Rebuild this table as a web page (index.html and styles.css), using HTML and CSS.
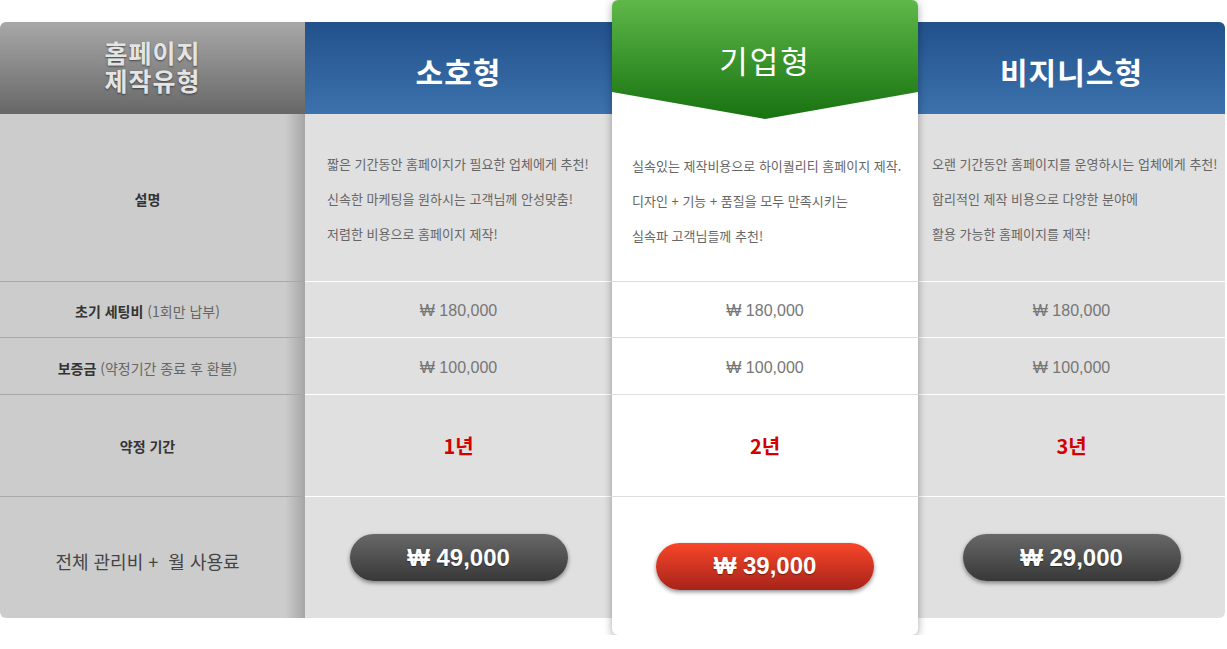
FILE: index.html
```html
<!DOCTYPE html>
<html lang="ko">

<head>
    <meta charset="UTF-8">
    <title>홈페이지 제작유형</title>
    <link rel="stylesheet" href="styles.css">
</head>

<body>
    <div class="pricing">
        <div class="col col-label">
            <div class="head head-label">
                <span>홈페이지</span>
                <span>제작유형</span>
            </div>
            <div class="body">
                <div class="row row-desc"><b>설명</b></div>
                <div class="row row-setup"><span><b>초기 세팅비</b> (1회만 납부)</span></div>
                <div class="row row-deposit"><span><b>보증금</b> (약정기간 종료 후 환불)</span></div>
                <div class="row row-term"><b>약정 기간</b></div>
                <div class="row row-price"><span class="total">전체 관리비 + &nbsp;월 사용료</span></div>
            </div>
        </div>

        <div class="col col-plan">
            <div class="head head-blue">소호형</div>
            <div class="body">
                <div class="row row-desc desc-left">
                    <p>짧은 기간동안 홈페이지가 필요한 업체에게 추천!</p>
                    <p>신속한 마케팅을 원하시는 고객님께 안성맞춤!</p>
                    <p>저렴한 비용으로 홈페이지 제작!</p>
                </div>
                <div class="row row-setup"><span class="won">₩ 180,000</span></div>
                <div class="row row-deposit"><span class="won">₩ 100,000</span></div>
                <div class="row row-term"><span class="term">1년</span></div>
                <div class="row row-price"><span class="btn">₩ 49,000</span></div>
            </div>
        </div>

        <div class="col col-featured">
            <div class="head head-green">기업형</div>
            <div class="body">
                <div class="row row-desc desc-mid">
                    <p>실속있는 제작비용으로 하이퀄리티 홈페이지 제작.</p>
                    <p>디자인 + 기능 + 품질을 모두 만족시키는</p>
                    <p>실속파 고객님들께 추천!</p>
                </div>
                <div class="row row-setup"><span class="won">₩ 180,000</span></div>
                <div class="row row-deposit"><span class="won">₩ 100,000</span></div>
                <div class="row row-term"><span class="term">2년</span></div>
                <div class="row row-price"><span class="btn btn-red">₩ 39,000</span></div>
            </div>
        </div>

        <div class="col col-plan col-last">
            <div class="head head-blue">비지니스형</div>
            <div class="body">
                <div class="row row-desc desc-right">
                    <p>오랜 기간동안 홈페이지를 운영하시는 업체에게 추천!</p>
                    <p>합리적인 제작 비용으로 다양한 분야에</p>
                    <p>활용 가능한 홈페이지를 제작!</p>
                </div>
                <div class="row row-setup"><span class="won">₩ 180,000</span></div>
                <div class="row row-deposit"><span class="won">₩ 100,000</span></div>
                <div class="row row-term"><span class="term">3년</span></div>
                <div class="row row-price"><span class="btn">₩ 29,000</span></div>
            </div>
        </div>
    </div>
</body>

</html>
```

FILE: styles.css
```css
body {
    margin: 0;
    background: #ffffff;
    font-family: "Noto Sans CJK KR", "Noto Sans", sans-serif;
}

.pricing {
    display: flex;
    align-items: flex-start;
    width: 1225px;
    padding-top: 22px;
}

.col {
    display: flex;
    flex-direction: column;
}

.col-label {
    width: 305px;
    border-radius: 6px 0 0 6px;
    overflow: hidden;
}

.col-plan {
    width: 307px;
    background: #e0e0e0;
}

.col-last {
    border-radius: 0 6px 6px 0;
    overflow: hidden;
}

.col-featured {
    width: 306px;
    margin-top: -22px;
    background: #ffffff;
    border-radius: 6px;
    overflow: hidden;
    position: relative;
    z-index: 1;
    box-shadow: 0 2px 9px rgba(0, 0, 0, 0.35);
}

/* headers */
.head {
    height: 92px;
    display: flex;
    align-items: center;
    justify-content: center;
    text-align: center;
    color: #ffffff;
    box-sizing: border-box;
}

.head-label {
    flex-direction: column;
    background: linear-gradient(#a8a8a8, #676767);
    color: #e4e4e4;
    font-size: 25px;
    font-weight: bold;
    line-height: 28px;
    letter-spacing: 1px;
    text-shadow: 0 1px 2px rgba(0, 0, 0, 0.5);
    padding-bottom: 4px;
}

.head-blue {
    background: linear-gradient(#22518b, #3c72ad);
    font-size: 30px;
    font-weight: bold;
    letter-spacing: 1px;
    padding-top: 6px;
}

.head-green {
    height: 119px;
    align-items: flex-start;
    padding-top: 39px;
    background: linear-gradient(#5eb849, #177210);
    font-size: 31px;
    line-height: 42px;
    letter-spacing: 2px;
    clip-path: polygon(0 0, 100% 0, 100% 92px, 50% 119px, 0 92px);
}

/* rows */
.body {
    display: flex;
    flex-direction: column;
}

.col-label .body {
    background: linear-gradient(to right, #cccccc calc(100% - 20px), #a6a6a6);
}

.row {
    display: flex;
    align-items: center;
    justify-content: center;
    box-sizing: border-box;
    border-top: 1px solid #ffffff;
}

.col-label .row {
    border-top-color: #a8a8a8;
    color: #666666;
    font-size: 14px;
    padding-right: 10px;
}

.col-label .row b {
    color: #333333;
}

.col-featured .row {
    border-top-color: #dddddd;
}

.row-desc {
    height: 167px;
    border-top: none;
    flex-direction: column;
    align-items: flex-start;
    padding-top: 2px;
}

.col-label .row-desc {
    align-items: center;
}

.col-featured .row-desc {
    height: 162px;
    padding-top: 0;
}

.row-desc p {
    margin: 0;
    font-size: 13px;
    line-height: 35px;
    color: #666666;
}

.desc-left {
    padding-left: 22px;
}

.desc-mid {
    padding-left: 20px;
}

.desc-right {
    padding-left: 14px;
}

.row-setup {
    height: 56px;
    padding-top: 3px;
}

.row-deposit {
    height: 57px;
    padding-top: 3px;
}

.row-term {
    height: 102px;
}

.row-price {
    height: 122px;
}

.col-featured .row-price {
    height: 139px;
}

.won {
    font-family: "Liberation Sans", "DejaVu Sans", sans-serif;
    font-size: 16px;
    color: #767676;
}

.term {
    font-size: 20px;
    font-weight: bold;
    color: #d40000;
}

.total {
    font-size: 18px;
    color: #444444;
    padding-top: 6px;
}

.btn {
    width: 218px;
    height: 47px;
    border-radius: 24px;
    display: flex;
    align-items: center;
    justify-content: center;
    background: linear-gradient(#686868, #383838);
    box-shadow: 0 2px 4px rgba(0, 0, 0, 0.45);
    color: #ffffff;
    font-family: "Liberation Sans", "DejaVu Sans", sans-serif;
    font-size: 24px;
    font-weight: bold;
    text-shadow: 0 1px 1px rgba(0, 0, 0, 0.4);
}

.btn-red {
    background: linear-gradient(#f8462a, #a7231a);
}
```
